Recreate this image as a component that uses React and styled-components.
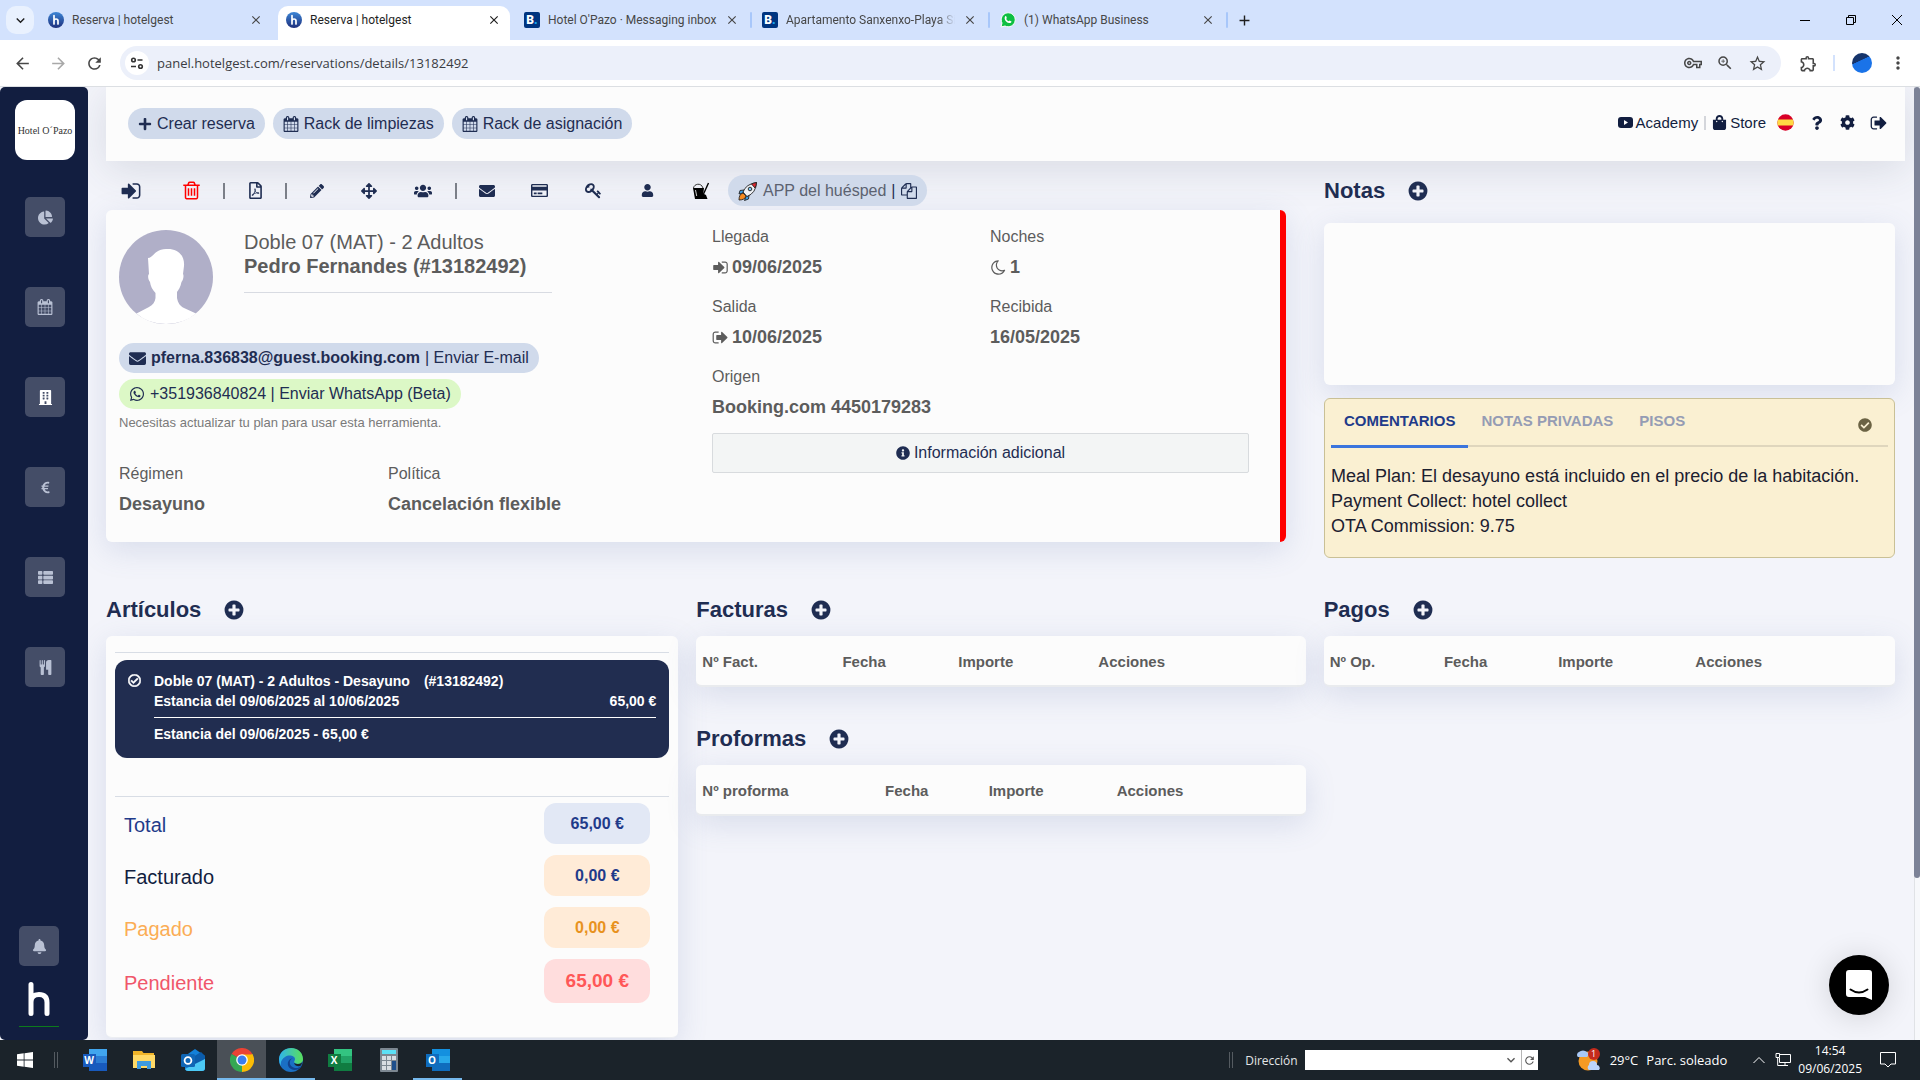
import React, { useState } from "react";
import styled, { createGlobalStyle, css } from "styled-components";
import {
  FaBell,
  FaBuilding,
  FaChartPie,
  FaCheckCircle,
  FaCog,
  FaEnvelope,
  FaEuroSign,
  FaInfoCircle,
  FaPencilAlt,
  FaPlus,
  FaQuestion,
  FaRegCheckCircle,
  FaRegCreditCard,
  FaRegFilePdf,
  FaShoppingBag,
  FaThList,
  FaUser,
  FaUsers,
  FaWhatsapp,
  FaArrowsAlt,
} from "react-icons/fa";
import {
  MdAdd,
  MdArrowBack,
  MdArrowForward,
  MdClose,
  MdExpandMore,
  MdMoreVert,
  MdOutlineExtension,
  MdOutlineVpnKey,
  MdRefresh,
  MdStarOutline,
  MdZoomIn,
} from "react-icons/md";

const GlobalStyle = createGlobalStyle`
  * {
    box-sizing: border-box;
  }

  body {
    margin: 0;
    font-family: "Liberation Sans", Arial, sans-serif;
    font-size: 16px;
    color: #5c5c5c;
    overflow: hidden;
  }

  button, input, select {
    font: inherit;
    color: inherit;
    margin: 0;
    padding: 0;
    border: none;
    background: none;
  }

  button {
    cursor: pointer;
  }

  a {
    color: inherit;
    text-decoration: none;
  }

  svg {
    display: block;
    flex-shrink: 0;
  }
`;

/* ---------- icons ---------- */

const glyphs = {
  signIn:
    "M1312 896q0 26-19 45l-544 544q-19 19-45 19t-45-19-19-45v-288h-448q-26 0-45-19t-19-45v-384q0-26 19-45t45-19h448v-288q0-26 19-45t45-19 45 19l544 544q19 19 19 45zm352-352v704q0 119-84.5 203.5t-203.5 84.5h-320q-13 0-22.5-9.5t-9.5-22.5q0-4-1-20t-.5-26.5 3-23.5 10-19.5 20.5-6.5h320q66 0 113-47t47-113v-704q0-66-47-113t-113-47h-312l-11.5-1-11.5-3-8-5.5-7-9-2-13.5q0-4-1-20t-.5-26.5 3-23.5 10-19.5 20.5-6.5h320q119 0 203.5 84.5t84.5 203.5z",
  signOut:
    "M704 1440q0 4 1 20t.5 26.5-3 23.5-10 19.5-20.5 6.5h-320q-119 0-203.5-84.5t-84.5-203.5v-704q0-119 84.5-203.5t203.5-84.5h320q13 0 22.5 9.5t9.5 22.5q0 4 1 20t.5 26.5-3 23.5-10 19.5-20.5 6.5h-320q-66 0-113 47t-47 113v704q0 66 47 113t113 47h312l11.5 1 11.5 3 8 5.5 7 9 2 13.5zm928-544q0 26-19 45l-544 544q-19 19-45 19t-45-19-19-45v-288h-448q-26 0-45-19t-19-45v-384q0-26 19-45t45-19h448v-288q0-26 19-45t45-19 45 19l544 544q19 19 19 45z",
  trash:
    "M704 736v576q0 14-9 23t-23 9h-64q-14 0-23-9t-9-23v-576q0-14 9-23t23-9h64q14 0 23 9t9 23zm256 0v576q0 14-9 23t-23 9h-64q-14 0-23-9t-9-23v-576q0-14 9-23t23-9h64q14 0 23 9t9 23zm256 0v576q0 14-9 23t-23 9h-64q-14 0-23-9t-9-23v-576q0-14 9-23t23-9h64q14 0 23 9t9 23zm128 724v-948h-896v948q0 22 7 40.5t14.5 27 10.5 8.5h832q3 0 10.5-8.5t14.5-27 7-40.5zm-672-1076h448l-48-117q-7-9-17-11h-317q-10 2-17 11zm928 32v64q0 14-9 23t-23 9h-96v948q0 83-47 143.5t-113 60.5h-832q-66 0-113-58.5t-47-141.5v-952h-96q-14 0-23-9t-9-23v-64q0-14 9-23t23-9h309l70-167q15-37 54-63t79-26h320q40 0 79 26t54 63l70 167h309q14 0 23 9t9 23z",
  calendar:
    "M192 1664h288v-288h-288v288zm352 0h320v-288h-320v288zm-352-352h288v-320h-288v320zm352 0h320v-320h-320v320zm-352-384h288v-288h-288v288zm736 736h320v-288h-320v288zm-384-736h320v-288h-320v288zm768 736h288v-288h-288v288zm-384-352h320v-320h-320v320zm-352-864v-288q0-13-9.5-22.5t-22.5-9.5h-64q-13 0-22.5 9.5t-9.5 22.5v288q0 13 9.5 22.5t22.5 9.5h64q13 0 22.5-9.5t9.5-22.5zm736 864h288v-320h-288v320zm-384-384h320v-288h-320v288zm384 0h288v-288h-288v288zm32-480v-288q0-13-9.5-22.5t-22.5-9.5h-64q-13 0-22.5 9.5t-9.5 22.5v288q0 13 9.5 22.5t22.5 9.5h64q13 0 22.5-9.5t9.5-22.5zm384-64v1280q0 52-38 90t-90 38h-1408q-52 0-90-38t-38-90v-1280q0-52 38-90t90-38h128v-96q0-66 47-113t113-47h64q66 0 113 47t47 113v96h384v-96q0-66 47-113t113-47h64q66 0 113 47t47 113v96h128q52 0 90 38t38 90z",
  moon: "M1390 1303q-54 9-110 9-182 0-337-90t-245-245-90-337q0-192 104-357-201 60-328.5 229t-127.5 384q0 130 51 248.5t136.5 204 204 136.5 248.5 51q144 0 273.5-61.5t220.5-171.5zm203-85q-94 203-283.5 324.5t-413.5 121.5q-156 0-298-61t-245-164-164-245-61-298q0-153 57.5-292.5t156-241.5 235.5-164.5 290-68.5q44-2 61 39 18 41-15 72-86 78-131.5 181.5t-45.5 218.5q0 148 73 273t198 198 273 73q118 0 228-51 41-18 72 13 14 14 17.5 34t-4.5 38z",
  plusCircle:
    "M1344 960v-128q0-26-19-45t-45-19h-256v-256q0-26-19-45t-45-19h-128q-26 0-45 19t-19 45v256h-256q-26 0-45 19t-19 45v128q0 26 19 45t45 19h256v256q0 26 19 45t45 19h128q26 0 45-19t19-45v-256h256q26 0 45-19t19-45zm320-64q0 209-103 385.5t-279.5 279.5-385.5 103-385.5-103-279.5-279.5-103-385.5 103-385.5 279.5-279.5 385.5-103 385.5 103 279.5 279.5 103 385.5z",
  key: "M832 512q0-80-56-136t-136-56-136 56-56 136q0 42 19 83-41-19-83-19-80 0-136 56t-56 136 56 136 136 56 136-56 56-136q0-42-19-83 41 19 83 19 80 0 136-56t56-136zm851 704q0 17-49 66t-66 49q-9 0-28.5-16t-36.5-33-38.5-40-24.5-26l-96 96 220 220q28 28 28 68 0 42-39 81t-81 39q-40 0-68-28l-671-671q-176 131-365 131-163 0-265.5-102.5t-102.5-265.5q0-160 95-313t248-248 313-95q163 0 265.5 102.5t102.5 265.5q0 189-131 365l355 355 96-96q-3-3-26-24.5t-40-38.5-33-36.5-16-28.5q0-17 49-66t66-49q13 0 23 10 6 6 46 44.5t82 79.5 86.5 86 73 78 28.5 41z",
  files:
    "M1696 384q40 0 68 28t28 68v1216q0 40-28 68t-68 28h-960q-40 0-68-28t-28-68v-288h-544q-40 0-68-28t-28-68v-672q0-40 20-88t48-76l408-408q28-28 76-48t88-20h416q40 0 68 28t28 68v328q68-40 128-40h416zm-544 213l-299 299h299v-299zm-640-384l-299 299h299v-299zm196 647l316-316v-416h-384v416q0 40-28 68t-68 28h-416v640h512v-256q0-40 20-88t48-76zm956 804v-1152h-384v416q0 40-28 68t-68 28h-416v640h896z",
  cutlery:
    "M832 64v640q0 61-35.5 111t-92.5 70v779q0 52-38 90t-90 38h-128q-52 0-90-38t-38-90v-779q-57-20-92.5-70t-35.5-111v-640q0-26 19-45t45-19 45 19 19 45v416q0 26 19 45t45 19 45-19 19-45v-416q0-26 19-45t45-19 45 19 19 45v416q0 26 19 45t45 19 45-19 19-45v-416q0-26 19-45t45-19 45 19 19 45zm768 0v1600q0 52-38 90t-90 38h-128q-52 0-90-38t-38-90v-512h-224q-13 0-22.5-9.5t-9.5-22.5v-800q0-132 94-226t226-94h256q26 0 45 19t19 45z",
};

function Glyph({ name, size = 18 }) {
  return (
    <svg width={size} height={size} viewBox="0 0 1792 1792" fill="currentColor">
      <path d={glyphs[name]} />
    </svg>
  );
}

function HotelgestIcon() {
  return (
    <svg width="16" height="16" viewBox="0 0 16 16">
      <defs>
        <linearGradient id="hg" x1="0" y1="0" x2="0" y2="1">
          <stop offset="0" stopColor="#3d86d6" />
          <stop offset="1" stopColor="#1d2f7c" />
        </linearGradient>
      </defs>
      <circle cx="8" cy="8" r="8" fill="url(#hg)" />
      <path
        d="M6 3.5V12M6 9q0-2 2-2t2 2v3"
        fill="none"
        stroke="#fff"
        strokeWidth="1.7"
        strokeLinecap="round"
      />
    </svg>
  );
}

function WhatsappTabIcon() {
  return (
    <svg width="16" height="16" viewBox="0 0 16 16">
      <path d="M1 15l1-4a7 7 0 1 1 3 3z" fill="#0dbf42" stroke="#fff" />
      <path
        d="M5.2 4.2c1-.8 1.400.9 1.600 1.800l-.6.9q.9 1.700 2.600 2.400l.8-.8 1.900 1c-.2 1.600-1.800 1.900-3.300 1.300-2.400-1-4.600-3.700-3-6.600z"
        fill="#fff"
      />
    </svg>
  );
}

function SiteInfoIcon() {
  return (
    <svg width="14" height="14" viewBox="0 0 14 14" fill="none" stroke="#333" strokeWidth="1.6">
      <circle cx="3.500" cy="4" r="1.800" />
      <path d="M7.500 4h5M1 10.500h5" />
      <circle cx="10.500" cy="10.500" r="1.800" />
    </svg>
  );
}

function SpainFlag() {
  return (
    <svg width="17" height="17" viewBox="0 0 17 17">
      <clipPath id="flag">
        <circle cx="8.500" cy="8.500" r="8.200" />
      </clipPath>
      <g clipPath="url(#flag)">
        <path fill="#d80027" d="M0 0h17v17H0z" />
        <path fill="#ffda44" d="M0 5.500h17v6H0z" />
      </g>
    </svg>
  );
}

function BucketIcon() {
  return (
    <svg width="18" height="18" viewBox="0 0 18 18">
      <path d="M1 6l2 11h7l1-3 1-8z" fill="#000" />
      <path d="M1.500 6C2 2 9 0 11 6" fill="none" stroke="#333" />
      <path d="M16.500 1l-5 11" stroke="#000" strokeWidth="1.400" />
      <path d="M10 11l4 2 1.500 4H8z" fill="#000" />
      <path d="M3.500 8l1.200 6" stroke="#fff" strokeWidth=".8" />
    </svg>
  );
}

function RocketIcon() {
  return (
    <svg width="20" height="20" viewBox="0 0 20 20" stroke="#222" strokeWidth=".9">
      <path d="M6 9L2 9.500 1 13l4-1zM11 14l-.5 4-4 1.500 1.500-4z" fill="#3ba0e8" />
      <path d="M5 12q-4 1-4 7 6 0 7-4z" fill="#f58a1f" />
      <path d="M5 11Q8 3 18.500 1.500 18 12 9 15.500z" fill="#eef1f5" />
      <path d="M13.500 3q2-1 5-1.500-.2 3-1.500 5.500z" fill="#e3262e" />
      <circle cx="12" cy="8" r="1.800" fill="#7cc7f2" />
    </svg>
  );
}

function AvatarPicture() {
  return (
    <svg width="94" height="94" viewBox="0 0 94 94">
      <circle cx="47" cy="47" r="47" fill="#b0afc8" />
      <path
        d="M47 19c10-1 19 5 18 17l-1 8c1 1 .5 6-1.500 8-1 5-3 8-4.500 10v6c1 5 3 8 7 10l12 5.500Q65 94 47 94T17.500 83.500L30 77c4-2 6-5 6.500-9v-5c-3-3-5-7-5.500-11-2-2-2.500-7-1-8l-1-16c5 0 7-9 18-9z"
        fill="#fff"
      />
    </svg>
  );
}

function OfficeIcon({ letter, dark, mid, light }) {
  return (
    <OfficeTile $dark={dark} $mid={mid} $light={light}>
      <OfficeLetter $dark={dark}>{letter}</OfficeLetter>
    </OfficeTile>
  );
}

function FolderIcon() {
  return (
    <svg width="22" height="20" viewBox="0 0 22 20">
      <path d="M0 1h9l1.500 2H21v15H0z" fill="#f0b429" />
      <path d="M0 5h22v13H0z" fill="#ffd966" />
      <path d="M4 11h14v8h-4v-3H8v3H4z" fill="#3f9be0" />
    </svg>
  );
}

function NewOutlookIcon() {
  return (
    <svg width="24" height="24" viewBox="0 0 24 24">
      <path d="M4 8L14 1l10 7v12q0 3-3 3H7q-3 0-3-3z" fill="#1380d8" />
      <path d="M12 9L20 4l4 4v3L10 21z" fill="#0b5cab" />
      <path d="M24 11v9q0 3-3 3H7q-2 0-3-2z" fill="#4cc9f5" />
      <rect y="6" width="14" height="13" rx="1.500" fill="#1066b5" />
      <circle cx="7" cy="12.500" r="3.400" fill="none" stroke="#fff" strokeWidth="1.800" />
    </svg>
  );
}

function ChromeIcon() {
  return (
    <svg width="24" height="24" viewBox="0 0 24 24">
      <path d="M12 12L1.600 6A12 12 0 0 1 22.400 6z" fill="#ea4335" />
      <path d="M12 12L22.400 6A12 12 0 0 1 12 24z" fill="#fbbc05" />
      <path d="M12 12V24A12 12 0 0 1 1.600 6z" fill="#34a853" />
      <path d="M12 6.500h10.700L17 14.500 12 24l4.800-9z" fill="#fbbc05" />
      <circle cx="12" cy="12" r="5.800" fill="#fff" />
      <circle cx="12" cy="12" r="4.500" fill="#3b7ded" />
    </svg>
  );
}

function EdgeIcon() {
  return (
    <svg width="24" height="24" viewBox="0 0 24 24">
      <defs>
        <linearGradient id="edge" x1="0" x2="1">
          <stop offset="0" stopColor="#2fb4ec" />
          <stop offset="1" stopColor="#5ae05a" />
        </linearGradient>
      </defs>
      <circle cx="12" cy="12" r="12" fill="#1a6fc4" />
      <path d="M0 11C1-3 23-4 24 11c0 5-5 6-8 4-2-1 0-2 0-4 0-3-6-5-10-2-3 2-5 5-4 9Q0 15 0 11z" fill="url(#edge)" />
      <path d="M14 10c-5 2-4 9 2 10 3 .5 5-1 6.500-2l-.5 1c-2 3-7 4-10 2-5-3-4-10 2-11z" fill="#11428f" />
      <path d="M15 15c3 2 8 1 8.800-2L22 17.500c-2 1.500-6 1-7-2.500z" fill="#1b232b" />
    </svg>
  );
}

function CalculatorIcon() {
  return (
    <svg width="18" height="24" viewBox="0 0 18 24">
      <rect width="18" height="24" rx="1" fill="#7c8791" />
      <path d="M2 2h14v4H2z" fill="#5ce0f5" />
      <path d="M2 8h4v4H2zM7 8h4v4H7zM12 8h4v4h-4zM2 13h4v4H2zM7 13h4v4H7zM2 18h4v4H2zM7 18h4v4H7z" fill="#d8dde2" />
      <path d="M12 13h4v9h-4z" fill="#1e4f8c" />
    </svg>
  );
}

function WeatherIcon() {
  return (
    <svg width="26" height="24" viewBox="0 0 26 24">
      <circle cx="12" cy="13" r="9.500" fill="#f59a23" />
      <path d="M2 9a3 3 0 0 1 1-5 5 4 0 0 1 8 0 3 3 0 0 1 0 5z" fill="#a9c8f5" />
      <path d="M13 22a3 3 0 0 1 0-5 4 4 0 0 1 8 0 3 3 0 0 1 2 5z" fill="#bcd5f9" />
    </svg>
  );
}

/* ---------- browser frame ---------- */

const Desktop = styled.div`
  display: flex;
  flex-direction: column;
  height: 100vh;
`;

const TabStrip = styled.div`
  display: flex;
  height: 40px;
  flex-shrink: 0;
  background-color: #d3e2fd;
  font-family: Roboto, sans-serif;
  font-size: 12px;
  color: #474747;
`;

const TabSearch = styled.button`
  display: flex;
  align-items: center;
  justify-content: center;
  width: 28px;
  height: 28px;
  margin: 6px;
  border-radius: 10px;
  background-color: #e9f1fe;
  color: #1f1f1f;
`;

const BrowserTab = styled.div`
  display: flex;
  align-items: center;
  gap: 8px;
  flex: 0 1 232px;
  min-width: 0;
  height: 34px;
  margin-top: 6px;
  padding: 0 9px 6px 8px;
  border-radius: 10px 10px 0 0;

  ${({ $active }) =>
    $active &&
    css`
      background-color: #ffffff;
      color: #1f1f1f;
    `}
`;

const TabTitle = styled.span`
  flex: 1;
  min-width: 0;
  line-height: 16px;
  white-space: nowrap;

  ${({ $faded }) =>
    $faded &&
    css`
      mask-image: linear-gradient(to right, #000 90%, transparent);
    `}
`;

const TabGap = styled.span`
  width: 2px;
  height: 16px;
  margin: 12px 2px;
  flex-shrink: 0;
  border-radius: 1px;
  background-color: ${({ $visible }) => ($visible ? "#a8c7fa" : "transparent")};
`;

const BookingIcon = styled.span`
  display: flex;
  align-items: center;
  justify-content: center;
  width: 16px;
  height: 16px;
  flex-shrink: 0;
  border-radius: 2px;
  background-color: #003580;
  color: #ffffff;
  font-size: 12px;
  font-weight: 900;

  i {
    color: #1aa7f0;
    font-style: normal;
  }
`;

const StripButton = styled.button`
  display: flex;
  align-items: center;
  justify-content: center;
  width: ${({ $wide }) => ($wide ? "46px" : "28px")};
  height: 40px;
  color: #1f1f1f;
`;

const TabClose = styled.button`
  display: flex;
  color: inherit;
`;

const WindowButtons = styled.div`
  display: flex;
  margin-left: auto;
`;

const Toolbar = styled.div`
  display: flex;
  align-items: center;
  height: 47px;
  flex-shrink: 0;
  padding: 0 4px;
  background-color: #ffffff;
  border-bottom: 1px solid #dcdfe3;
  font-family: "Open Sans", sans-serif;
  color: #474747;
`;

const ToolButton = styled.button`
  display: flex;
  align-items: center;
  justify-content: center;
  width: 36px;
  height: 34px;
  color: ${({ $faded }) => ($faded ? "#a8a8a8" : "#474747")};
`;

const AddressBar = styled.div`
  display: flex;
  align-items: center;
  flex: 1;
  height: 34px;
  margin: 0 9px 0 8px;
  padding: 0 8px 0 5px;
  border-radius: 17px;
  background-color: #ecf0fa;
`;

const SiteInfo = styled.button`
  display: flex;
  align-items: center;
  justify-content: center;
  width: 24px;
  height: 24px;
  border-radius: 12px;
  background-color: #ffffff;
`;

const AddressInput = styled.input`
  flex: 1;
  min-width: 0;
  margin-left: 8px;
  font-size: 13px;
  color: #3a3c42;
  outline: none;
`;

const AddressAction = styled.button`
  display: flex;
  align-items: center;
  justify-content: center;
  width: 32px;
  color: #474747;
`;

const ToolDivider = styled.span`
  width: 2px;
  height: 16px;
  margin: 0 7px;
  background-color: #d3e2fd;
`;

const Profile = styled.button`
  width: 20px;
  height: 20px;
  margin: 0 8px 0 10px;
  border-radius: 50%;
  background: linear-gradient(155deg, #16346b 38%, #1a73e8 40%);
`;

/* ---------- app ---------- */

const Viewport = styled.div`
  position: relative;
  display: flex;
  flex: 1;
  min-height: 0;
  overflow: hidden;
  background-color: #f3f4fa;
`;

const Sidebar = styled.nav`
  display: flex;
  flex-direction: column;
  width: 88px;
  flex-shrink: 0;
  padding: 13px 15px;
  border-radius: 5px;
  background-color: #121e40;
  z-index: 1;
`;

const HotelLogo = styled.a`
  display: flex;
  align-items: center;
  justify-content: center;
  width: 60px;
  height: 60px;
  margin-bottom: 37px;
  border-radius: 12px;
  background-color: #ffffff;
  color: #333333;
  font-family: "Liberation Serif", serif;
  font-size: 10px;
  white-space: nowrap;
`;

const SideButton = styled.button`
  display: flex;
  align-items: center;
  justify-content: center;
  width: 40px;
  height: 40px;
  margin: 0 0 50px 10px;
  border-radius: 5px;
  background-color: #444d67;
  color: ${({ $bright }) => ($bright ? "#ffffff" : "#b9c1d4")};
`;

const SideFooter = styled.div`
  display: flex;
  flex-direction: column;
  margin: auto 0 0 4px;
  width: 40px;

  ${SideButton} {
    margin: 0 0 15px 0;
  }

  svg {
    align-self: center;
  }
`;

const BrandLink = styled.a`
  display: flex;
  justify-content: center;
  padding-bottom: 9px;
  border-bottom: 1px solid #0c7a1c;
`;

const Page = styled.main`
  flex: 1;
  min-width: 0;
`;

const Header = styled.header`
  display: flex;
  align-items: center;
  gap: 8px;
  height: 74px;
  margin: 0 9px 0 18px;
  padding: 0 11px 1px 22px;
  background-color: #fcfcfc;
  box-shadow: 0 8px 40px rgba(60, 70, 90, 0.14);
`;

const Pill = styled.a`
  display: inline-flex;
  align-items: center;
  gap: 5px;
  height: ${({ $short }) => ($short ? "30px" : "31px")};
  padding: 0 10px;
  border-radius: 16px;
  background-color: ${({ $green }) => ($green ? "#dcf8c6" : "#d0daeb")};
  color: #1f2d52;
  white-space: nowrap;

  span {
    color: #5c6270;
  }
`;

const HeaderLinks = styled.div`
  display: flex;
  align-items: center;
  margin: 0 0 2px auto;
  font-size: 15px;
  color: #121e40;
`;

const HeaderLink = styled.a`
  display: flex;
  align-items: center;
  gap: 3px;

  &:last-of-type {
    margin-right: 4px;
  }
`;

const LinkDivider = styled.span`
  width: 2px;
  height: 14px;
  margin: 0 6px;
  background-color: #d4d6db;
`;

const HeaderButton = styled.button`
  display: flex;
  align-items: center;
  justify-content: center;
  width: 31px;
  color: #121e40;
`;

const Content = styled.div`
  padding: 14px 19px 0 18px;
`;

const TopGrid = styled.div`
  display: grid;
  grid-template-columns: minmax(0, 1180fr) minmax(0, 571fr);
  column-gap: 38px;
  align-items: start;
  margin-bottom: 36px;
`;

const BottomGrid = styled.div`
  display: grid;
  grid-template-columns: minmax(0, 572fr) minmax(0, 609fr) minmax(0, 571fr);
  column-gap: 18px;
  align-items: start;
`;

const Actions = styled.div`
  display: flex;
  align-items: center;
  height: 31px;
  margin-bottom: 4px;
`;

const ActionButton = styled.button`
  display: flex;
  align-items: center;
  justify-content: center;
  width: ${({ $narrow }) => ($narrow ? "50px" : "54px")};
  height: 31px;
  color: ${({ $danger }) => ($danger ? "#ff0000" : "#1f2d52")};

  &:first-child {
    width: 50px;
    margin-right: 8px;
  }
`;

const ActionDivider = styled.span`
  width: 2px;
  height: 16px;
  margin: 0 5px;
  background-color: #7b7f88;
`;

const Card = styled.section`
  border-radius: 6px;
  background-color: #fcfcfc;
  box-shadow: 0 8px 30px rgba(92, 116, 170, 0.18);
`;

const ReservationCard = styled(Card)`
  display: grid;
  grid-template-columns: minmax(0, 593fr) minmax(0, 568fr);
  min-height: 332px;
  padding-left: 13px;
  border-right: 6px solid #ff0000;
`;

const GuestSide = styled.div`
  padding: 20px 0 26px;
`;

const GuestHead = styled.div`
  display: flex;
  gap: 31px;
  margin-bottom: 19px;
`;

const GuestName = styled.h1`
  width: 308px;
  margin: 0 0 31px;
  padding-bottom: 14px;
  border-bottom: 1px solid #d8dbe2;
  font-size: 20px;
  line-height: 24px;
  font-weight: 400;

  strong {
    display: block;
  }
`;

const ContactList = styled.div`
  display: flex;
  flex-direction: column;
  align-items: flex-start;
  gap: 6px;
`;

const PlanHint = styled.p`
  margin: 4px 0 28px;
  font-size: 13px;
  line-height: 20px;
  color: #7a7a7a;
`;

const Fields = styled.dl`
  display: grid;
  grid-template-columns: ${({ $first }) => $first}fr ${({ $second }) => $second}fr;
  row-gap: 15px;
  margin: 0;
`;

const Field = styled.div`
  line-height: 24px;
  grid-column: ${({ $full }) => ($full ? "1 / -1" : "auto")};

  dt {
    line-height: 26px;
  }

  dd {
    display: flex;
    align-items: center;
    gap: 3px;
    margin: 5px 0 0;
    font-size: 18px;
    font-weight: 700;
  }
`;

const StaySide = styled.div`
  padding: 14px 31px 0 0;
`;

const InfoButton = styled.button`
  display: flex;
  align-items: center;
  justify-content: center;
  gap: 4px;
  width: 100%;
  height: 40px;
  margin-top: 14px;
  border: 1px solid #d8dbde;
  border-radius: 2px;
  background-color: #f3f5f5;
  color: #1f2d52;
`;

const SectionHead = styled.div`
  display: flex;
  align-items: center;
  gap: 22px;
  height: 31px;
  margin-bottom: ${({ $loose }) => ($loose ? "17px" : "11px")};
  color: #1f2d52;

  h2 {
    margin: 0;
    font-size: 22px;
  }

  button {
    display: flex;
  }
`;

const NotesCard = styled(Card)`
  height: 162px;
  margin-bottom: 13px;
`;

const CommentsCard = styled.section`
  height: 160px;
  padding: 0 6px;
  border: 1px solid #c9c096;
  border-radius: 6px;
  background-color: #faf0d2;
  color: #121e40;
`;

const CommentTabs = styled.div`
  display: flex;
  height: 48px;
  border-bottom: 2px solid #dfd6bd;
`;

const CommentTab = styled.button`
  height: 49px;
  padding: 0 13px 4px;
  font-size: 15px;
  font-weight: 700;
  color: #959cb4;
  border-bottom: 3px solid transparent;

  ${({ $active }) =>
    $active &&
    css`
      color: #1f3b8a;
      border-bottom-color: #3b75dd;
    `}
`;

const ConfirmComments = styled.button`
  display: flex;
  align-items: center;
  margin: 5px 16px 0 auto;
  color: #6b6344;
`;

const CommentText = styled.p`
  margin: 17px 0 0;
  font-size: 18px;
  line-height: 25px;
  color: #1c2030;
`;

const ItemsCard = styled(Card)`
  padding: 16px 9px 34px;
  border-bottom: 1px solid #eceef2;
`;

const StayItem = styled.article`
  display: flex;
  gap: 13px;
  margin: 7px 0 38px;
  padding: 10px 13px 14px;
  border-radius: 12px;
  background-color: #212d50;
  color: #ffffff;
  font-size: 14px;
  line-height: 20px;
  font-weight: 700;

  svg {
    margin-top: 4px;
    stroke: currentColor;
    stroke-width: 24px;
  }
`;

const StayBody = styled.div`
  flex: 1;
  padding-top: 1px;
`;

const StayRow = styled.div`
  display: flex;
  gap: 14px;
  justify-content: ${({ $spread }) => ($spread ? "space-between" : "flex-start")};
`;

const StayBreakdown = styled.div`
  margin-top: 6px;
  padding-top: 6px;
  border-top: 1px solid #ffffff;
`;

const Rule = styled.hr`
  height: 1px;
  margin: 0;
  border: none;
  background-color: #d8dde5;
`;

const tones = {
  total: { label: "#1f3b8a", text: "#1f3b8a", back: "#e2e8f5" },
  billed: { label: "#121e40", text: "#1f3b8a", back: "#ffebd7" },
  paid: { label: "#fbad55", text: "#e8921e", back: "#ffebd7" },
  pending: { label: "#f0566a", text: "#ff5757", back: "#ffdddd" },
};

const Totals = styled.dl`
  display: flex;
  flex-direction: column;
  gap: 11px;
  margin: 6px 19px 0 9px;
`;

const TotalRow = styled.div`
  display: flex;
  align-items: center;
  justify-content: space-between;
  font-size: 20px;
  color: ${({ $tone }) => tones[$tone].label};

  dt {
    padding-top: 4px;
  }

  dd {
    display: flex;
    align-items: center;
    justify-content: center;
    width: 106px;
    height: ${({ $large }) => ($large ? "44px" : "41px")};
    margin: 0;
    border-radius: 12px;
    font-size: ${({ $large }) => ($large ? "19px" : "16px")};
    font-weight: 700;
    color: ${({ $tone }) => tones[$tone].text};
    background-color: ${({ $tone }) => tones[$tone].back};
  }
`;

const TableCard = styled(Card)`
  margin-bottom: 36px;
  border-bottom: 2px solid #e9ebee;
`;

const Table = styled.table`
  width: 100%;
  table-layout: fixed;
  border-collapse: collapse;

  th {
    height: 49px;
    padding: 2px 6px 0;
    font-size: 15px;
    text-align: left;
  }
`;

const HeadCell = styled.th`
  width: ${({ $share }) => $share}%;
`;

const ChatButton = styled.button`
  position: absolute;
  right: 31px;
  bottom: 25px;
  display: flex;
  align-items: center;
  justify-content: center;
  width: 60px;
  height: 60px;
  border-radius: 50%;
  background-color: #000000;
  box-shadow: 0 2px 30px rgba(0, 0, 0, 0.14);
`;

const ScrollTrack = styled.div`
  width: 6px;
  flex-shrink: 0;
  background-color: #f7f8fb;
  border-left: 1px solid #e0e2e6;
`;

const ScrollThumb = styled.div`
  width: 6px;
  height: 83%;
  margin-left: -1px;
  border-radius: 3px;
  background-color: #7c8297;
`;

/* ---------- taskbar ---------- */

const Taskbar = styled.footer`
  display: flex;
  align-items: center;
  height: 40px;
  flex-shrink: 0;
  background-color: #1b232a;
  color: #ffffff;
  font-family: "Open Sans", sans-serif;
  font-size: 12px;
`;

const TaskButton = styled.button`
  display: flex;
  align-items: center;
  justify-content: center;
  width: 49px;
  height: 40px;
  background-color: ${({ $current }) => ($current ? "#4a5057" : "transparent")};
  border-bottom: 2px solid ${({ $open, $current }) => ($open || $current ? "#76b9ed" : "transparent")};
  border-top: 2px solid transparent;
`;

const Grip = styled.span`
  width: 4px;
  height: 16px;
  margin: 0 12px 0 5px;
  border: 1px solid #555b61;
  border-width: 0 1px;
`;

const OfficeTile = styled.span`
  display: flex;
  align-items: center;
  width: 24px;
  height: 22px;
  background: linear-gradient(
    ${({ $light, $mid, $dark }) => `${$light} 30%, ${$mid} 30%, ${$mid} 65%, ${$dark} 65%`}
  );
  background-size: 18px 22px;
  background-position: right;
  background-repeat: no-repeat;
`;

const OfficeLetter = styled.b`
  width: 13px;
  height: 13px;
  background-color: ${({ $dark }) => $dark};
  font-size: 10px;
  line-height: 13px;
  text-align: center;
`;

const Tray = styled.div`
  display: flex;
  align-items: center;
  margin-left: auto;
  padding-right: 24px;
`;

const AddressPicker = styled.label`
  display: flex;
  align-items: center;
  gap: 7px;
  color: #e3e5e7;
`;

const PickerBox = styled.span`
  display: flex;
  align-items: center;
  width: 233px;
  height: 20px;
  background-color: #ffffff;
  color: #555555;

  select {
    flex: 1;
    height: 20px;
    appearance: none;
    outline: none;
  }

  button {
    display: flex;
    align-items: center;
    justify-content: center;
    width: 17px;
    height: 20px;
    margin-left: 2px;
    border-left: 1px solid #b5b5b5;
  }
`;

const Weather = styled.button`
  position: relative;
  display: flex;
  align-items: center;
  gap: 8px;
  margin: 0 26px 0 38px;
  font-size: 13px;
`;

const WeatherBadge = styled.span`
  position: absolute;
  left: 12px;
  top: 0;
  width: 12px;
  height: 12px;
  border-radius: 6px;
  background-color: #c42b1c;
  font-size: 9px;
  line-height: 12px;
  text-align: center;
`;

const Clock = styled.time`
  margin: 0 18px 0 7px;
  line-height: 18px;
  text-align: center;
`;

const browserTabs = [
  { title: "Reserva | hotelgest", icon: "hotelgest" },
  { title: "Reserva | hotelgest", icon: "hotelgest", active: true },
  { title: "Hotel O'Pazo · Messaging inbox", icon: "booking", divided: true },
  { title: "Apartamento Sanxenxo-Playa Si", icon: "booking", divided: true, faded: true },
  { title: "(1) WhatsApp Business", icon: "whatsapp", divided: true },
];

function Favicon({ kind }) {
  if (kind === "booking") {
    return (
      <BookingIcon>
        B<i>.</i>
      </BookingIcon>
    );
  }
  return kind === "whatsapp" ? <WhatsappTabIcon /> : <HotelgestIcon />;
}

function BrowserFrame() {
  return (
    <>
      <TabStrip>
        <TabSearch aria-label="Buscar pestañas">
          <MdExpandMore size={17} />
        </TabSearch>
        {browserTabs.map((tab, index) => (
          <React.Fragment key={index}>
            <BrowserTab $active={tab.active}>
              <Favicon kind={tab.icon} />
              <TabTitle $faded={tab.faded}>{tab.title}</TabTitle>
              <TabClose aria-label="Cerrar pestaña">
                <MdClose size={14} />
              </TabClose>
            </BrowserTab>
            <TabGap $visible={tab.divided} />
          </React.Fragment>
        ))}
        <StripButton aria-label="Nueva pestaña">
          <MdAdd size={17} />
        </StripButton>
        <WindowButtons>
          <StripButton $wide aria-label="Minimizar">
            <svg width="10" height="10" viewBox="0 0 10 10" stroke="#000">
              <path d="M0 5.500h10" />
            </svg>
          </StripButton>
          <StripButton $wide aria-label="Restaurar">
            <svg width="10" height="10" viewBox="0 0 10 10" fill="none" stroke="#000">
              <path d="M.5 2.500h7v7h-7zM2.500 2.500v-2h7v7h-2" />
            </svg>
          </StripButton>
          <StripButton $wide aria-label="Cerrar">
            <svg width="10" height="10" viewBox="0 0 10 10" stroke="#000">
              <path d="M0 0l10 10M10 0L0 10" />
            </svg>
          </StripButton>
        </WindowButtons>
      </TabStrip>
      <Toolbar>
        <ToolButton aria-label="Atrás">
          <MdArrowBack size={19} />
        </ToolButton>
        <ToolButton $faded aria-label="Adelante">
          <MdArrowForward size={19} />
        </ToolButton>
        <ToolButton aria-label="Recargar">
          <MdRefresh size={19} />
        </ToolButton>
        <AddressBar>
          <SiteInfo aria-label="Información del sitio">
            <SiteInfoIcon />
          </SiteInfo>
          <AddressInput
            aria-label="Dirección web"
            defaultValue="panel.hotelgest.com/reservations/details/13182492"
          />
          <AddressAction aria-label="Contraseñas">
            <MdOutlineVpnKey size={18} />
          </AddressAction>
          <AddressAction aria-label="Zoom">
            <MdZoomIn size={18} />
          </AddressAction>
          <AddressAction aria-label="Favorito">
            <MdStarOutline size={19} />
          </AddressAction>
        </AddressBar>
        <ToolButton aria-label="Extensiones">
          <MdOutlineExtension size={19} />
        </ToolButton>
        <ToolDivider />
        <Profile aria-label="Perfil" />
        <ToolButton aria-label="Menú">
          <MdMoreVert size={20} />
        </ToolButton>
      </Toolbar>
    </>
  );
}

function AppSidebar() {
  return (
    <Sidebar>
      <HotelLogo href="#">Hotel O´Pazo</HotelLogo>
      <SideButton aria-label="Panel">
        <FaChartPie size={15} />
      </SideButton>
      <SideButton aria-label="Calendario">
        <Glyph name="calendar" size={16} />
      </SideButton>
      <SideButton $bright aria-label="Alojamientos">
        <FaBuilding size={15} />
      </SideButton>
      <SideButton aria-label="Tarifas">
        <FaEuroSign size={13} />
      </SideButton>
      <SideButton aria-label="Listados">
        <FaThList size={15} />
      </SideButton>
      <SideButton aria-label="Restaurante">
        <Glyph name="cutlery" size={15} />
      </SideButton>
      <SideFooter>
        <SideButton aria-label="Avisos">
          <FaBell size={15} />
        </SideButton>
        <BrandLink href="#" aria-label="hotelgest">
          <svg width="24" height="36" viewBox="0 0 24 36" fill="none" stroke="#fff" strokeWidth="5" strokeLinecap="round">
            <path d="M4 3.500v29M4 21q0-7.500 8-7.500t8 8v11" />
          </svg>
        </BrandLink>
      </SideFooter>
    </Sidebar>
  );
}

function SectionTitle({ children, loose }) {
  return (
    <SectionHead $loose={loose}>
      <h2>{children}</h2>
      <button aria-label={`Añadir ${children}`}>
        <Glyph name="plusCircle" size={22} />
      </button>
    </SectionHead>
  );
}

function RecordTable({ columns }) {
  return (
    <TableCard>
      <Table>
        <thead>
          <tr>
            {columns.map(([label, share]) => (
              <HeadCell key={label} $share={share}>
                {label}
              </HeadCell>
            ))}
          </tr>
        </thead>
      </Table>
    </TableCard>
  );
}

function Reservation() {
  return (
    <ReservationCard>
      <GuestSide>
        <GuestHead>
          <AvatarPicture />
          <GuestName>
            Doble 07 (MAT) - 2 Adultos
            <strong>Pedro Fernandes (#13182492)</strong>
          </GuestName>
        </GuestHead>
        <ContactList>
          <Pill $short href="#">
            <FaEnvelope size={17} />
            <b>pferna.836838@guest.booking.com</b> | Enviar E-mail
          </Pill>
          <Pill $short $green href="#">
            <FaWhatsapp size={16} />
            +351936840824 | Enviar WhatsApp (Beta)
          </Pill>
        </ContactList>
        <PlanHint>Necesitas actualizar tu plan para usar esta herramienta.</PlanHint>
        <Fields $first={269} $second={324}>
          <Field>
            <dt>Régimen</dt>
            <dd>Desayuno</dd>
          </Field>
          <Field>
            <dt>Política</dt>
            <dd>Cancelación flexible</dd>
          </Field>
        </Fields>
      </GuestSide>
      <StaySide>
        <Fields $first={278} $second={259}>
          <Field>
            <dt>Llegada</dt>
            <dd>
              <Glyph name="signIn" size={17} />
              09/06/2025
            </dd>
          </Field>
          <Field>
            <dt>Noches</dt>
            <dd>
              <Glyph name="moon" size={17} />1
            </dd>
          </Field>
          <Field>
            <dt>Salida</dt>
            <dd>
              <Glyph name="signOut" size={17} />
              10/06/2025
            </dd>
          </Field>
          <Field>
            <dt>Recibida</dt>
            <dd>16/05/2025</dd>
          </Field>
          <Field $full>
            <dt>Origen</dt>
            <dd>Booking.com 4450179283</dd>
          </Field>
        </Fields>
        <InfoButton>
          <FaInfoCircle size={14} />
          Información adicional
        </InfoButton>
      </StaySide>
    </ReservationCard>
  );
}

const commentTabs = ["COMENTARIOS", "NOTAS PRIVADAS", "PISOS"];

function Comments() {
  const [current, setCurrent] = useState(commentTabs[0]);

  return (
    <CommentsCard>
      <CommentTabs>
        {commentTabs.map((tab) => (
          <CommentTab key={tab} $active={tab === current} onClick={() => setCurrent(tab)}>
            {tab}
          </CommentTab>
        ))}
        <ConfirmComments aria-label="Confirmar">
          <FaCheckCircle size={14} />
        </ConfirmComments>
      </CommentTabs>
      <CommentText>
        Meal Plan: El desayuno está incluido en el precio de la habitación.
        <br />
        Payment Collect: hotel collect
        <br />
        OTA Commission: 9.75
      </CommentText>
    </CommentsCard>
  );
}

function Items() {
  return (
    <ItemsCard>
      <Rule />
      <StayItem>
        <FaRegCheckCircle size={13} />
        <StayBody>
          <StayRow>
            <span>Doble 07 (MAT) - 2 Adultos - Desayuno</span>
            <span>(#13182492)</span>
          </StayRow>
          <StayRow $spread>
            <span>Estancia del 09/06/2025 al 10/06/2025</span>
            <span>65,00 €</span>
          </StayRow>
          <StayBreakdown>Estancia del 09/06/2025 - 65,00 €</StayBreakdown>
        </StayBody>
      </StayItem>
      <Rule />
      <Totals>
        <TotalRow $tone="total">
          <dt>Total</dt>
          <dd>65,00 €</dd>
        </TotalRow>
        <TotalRow $tone="billed">
          <dt>Facturado</dt>
          <dd>0,00 €</dd>
        </TotalRow>
        <TotalRow $tone="paid">
          <dt>Pagado</dt>
          <dd>0,00 €</dd>
        </TotalRow>
        <TotalRow $tone="pending" $large>
          <dt>Pendiente</dt>
          <dd>65,00 €</dd>
        </TotalRow>
      </Totals>
    </ItemsCard>
  );
}

function WindowsTaskbar() {
  return (
    <Taskbar>
      <TaskButton aria-label="Inicio">
        <svg width="16" height="16" viewBox="0 0 16 16" fill="#fff">
          <path d="M0 2.300l6.700-1v6.300H0zM7.500 1.200L16 0v7.600H7.500zM0 8.400h6.700v6.300L0 13.700zM7.500 8.400H16V16l-8.500-1.200z" />
        </svg>
      </TaskButton>
      <Grip />
      <TaskButton aria-label="Word">
        <OfficeIcon letter="W" dark="#185abd" mid="#2b7cd3" light="#41a5ee" />
      </TaskButton>
      <TaskButton aria-label="Explorador">
        <FolderIcon />
      </TaskButton>
      <TaskButton aria-label="Outlook">
        <NewOutlookIcon />
      </TaskButton>
      <TaskButton $current aria-label="Chrome">
        <ChromeIcon />
      </TaskButton>
      <TaskButton $open aria-label="Edge">
        <EdgeIcon />
      </TaskButton>
      <TaskButton aria-label="Excel">
        <OfficeIcon letter="X" dark="#107c41" mid="#21a366" light="#33c481" />
      </TaskButton>
      <TaskButton aria-label="Calculadora">
        <CalculatorIcon />
      </TaskButton>
      <TaskButton $open aria-label="Outlook clásico">
        <OfficeIcon letter="O" dark="#0f6cbd" mid="#28a8ea" light="#1490df" />
      </TaskButton>
      <Tray>
        <Grip />
        <AddressPicker>
          Dirección
          <PickerBox>
            <select aria-label="Dirección" />
            <MdExpandMore size={16} />
            <button aria-label="Actualizar">
              <MdRefresh size={13} />
            </button>
          </PickerBox>
        </AddressPicker>
        <Weather>
          <WeatherIcon />
          <WeatherBadge>1</WeatherBadge>
          <span>29°C</span>
          <span>Parc. soleado</span>
        </Weather>
        <svg width="12" height="8" viewBox="0 0 12 8" fill="none" stroke="#fff">
          <path d="M.5 7L6 1.500 11.500 7" />
        </svg>
        <svg width="26" height="16" viewBox="-10 0 26 16" fill="none" stroke="#fff">
          <path d="M5 2.500h10.500v8H4.500V6M7 13.500h6M10 10.500v3M1 1.500h3.500v4H1zM2.700 5.500v8H7" />
        </svg>
        <Clock>
          14:54
          <br />
          09/06/2025
        </Clock>
        <svg width="16" height="16" viewBox="0 0 16 16" fill="none" stroke="#fff">
          <path d="M.5.5h15v11.500h-4.500L8 15l-3-3H.5z" />
        </svg>
      </Tray>
    </Taskbar>
  );
}

export default function App() {
  return (
    <Desktop>
      <GlobalStyle />
      <BrowserFrame />
      <Viewport>
        <AppSidebar />
        <Page>
          <Header>
            <Pill href="#">
              <FaPlus size={14} />
              Crear reserva
            </Pill>
            <Pill href="#">
              <Glyph name="calendar" size={16} />
              Rack de limpiezas
            </Pill>
            <Pill href="#">
              <Glyph name="calendar" size={16} />
              Rack de asignación
            </Pill>
            <HeaderLinks>
              <HeaderLink href="#">
                <svg width="15" height="11" viewBox="0 0 15 11">
                  <rect width="15" height="11" rx="3" fill="#121e40" />
                  <path d="M6 3l4 2.500L6 8z" fill="#fff" />
                </svg>
                Academy
              </HeaderLink>
              <LinkDivider />
              <HeaderLink href="#">
                <FaShoppingBag size={15} />
                Store
              </HeaderLink>
              <HeaderButton aria-label="Idioma">
                <SpainFlag />
              </HeaderButton>
              <HeaderButton aria-label="Ayuda">
                <FaQuestion size={14} />
              </HeaderButton>
              <HeaderButton aria-label="Ajustes">
                <FaCog size={15} />
              </HeaderButton>
              <HeaderButton aria-label="Salir">
                <Glyph name="signOut" size={18} />
              </HeaderButton>
            </HeaderLinks>
          </Header>
          <Content>
            <TopGrid>
              <div>
                <Actions>
                  <ActionButton aria-label="Check-in">
                    <Glyph name="signIn" size={22} />
                  </ActionButton>
                  <ActionButton $danger aria-label="Eliminar">
                    <Glyph name="trash" size={21} />
                  </ActionButton>
                  <ActionDivider />
                  <ActionButton $narrow aria-label="PDF">
                    <FaRegFilePdf size={17} />
                  </ActionButton>
                  <ActionDivider />
                  <ActionButton $narrow aria-label="Editar">
                    <FaPencilAlt size={14} />
                  </ActionButton>
                  <ActionButton aria-label="Mover">
                    <FaArrowsAlt size={16} />
                  </ActionButton>
                  <ActionButton aria-label="Huéspedes">
                    <FaUsers size={18} />
                  </ActionButton>
                  <ActionDivider />
                  <ActionButton $narrow aria-label="Correo">
                    <FaEnvelope size={16} />
                  </ActionButton>
                  <ActionButton aria-label="Tarjeta">
                    <FaRegCreditCard size={17} />
                  </ActionButton>
                  <ActionButton aria-label="Llave">
                    <Glyph name="key" size={17} />
                  </ActionButton>
                  <ActionButton aria-label="Cliente">
                    <FaUser size={13} />
                  </ActionButton>
                  <ActionButton aria-label="Limpieza">
                    <BucketIcon />
                  </ActionButton>
                  <Pill href="#">
                    <RocketIcon />
                    <span>APP del huésped</span>|
                    <Glyph name="files" size={16} />
                  </Pill>
                </Actions>
                <Reservation />
              </div>
              <div>
                <SectionTitle loose>Notas</SectionTitle>
                <NotesCard />
                <Comments />
              </div>
            </TopGrid>
            <BottomGrid>
              <div>
                <SectionTitle>Artículos</SectionTitle>
                <Items />
              </div>
              <div>
                <SectionTitle>Facturas</SectionTitle>
                <RecordTable
                  columns={[
                    ["Nº Fact.", 23],
                    ["Fecha", 19],
                    ["Importe", 23],
                    ["Acciones", 35],
                  ]}
                />
                <SectionTitle>Proformas</SectionTitle>
                <RecordTable
                  columns={[
                    ["Nº proforma", 30],
                    ["Fecha", 17],
                    ["Importe", 21],
                    ["Acciones", 32],
                  ]}
                />
              </div>
              <div>
                <SectionTitle>Pagos</SectionTitle>
                <RecordTable
                  columns={[
                    ["Nº Op.", 20],
                    ["Fecha", 20],
                    ["Importe", 24],
                    ["Acciones", 36],
                  ]}
                />
              </div>
            </BottomGrid>
          </Content>
        </Page>
        <ScrollTrack>
          <ScrollThumb />
        </ScrollTrack>
        <ChatButton aria-label="Chat">
          <svg width="28" height="32" viewBox="0 0 28 32">
            <path d="M4 1h20q3 0 3 3v27l-7-3H4q-3 0-3-3V4q0-3 3-3z" fill="#fff" />
            <path d="M5.500 20.500q8.500 6 17 0" fill="none" stroke="#000" strokeWidth="2" strokeLinecap="round" />
          </svg>
        </ChatButton>
      </Viewport>
      <WindowsTaskbar />
    </Desktop>
  );
}
